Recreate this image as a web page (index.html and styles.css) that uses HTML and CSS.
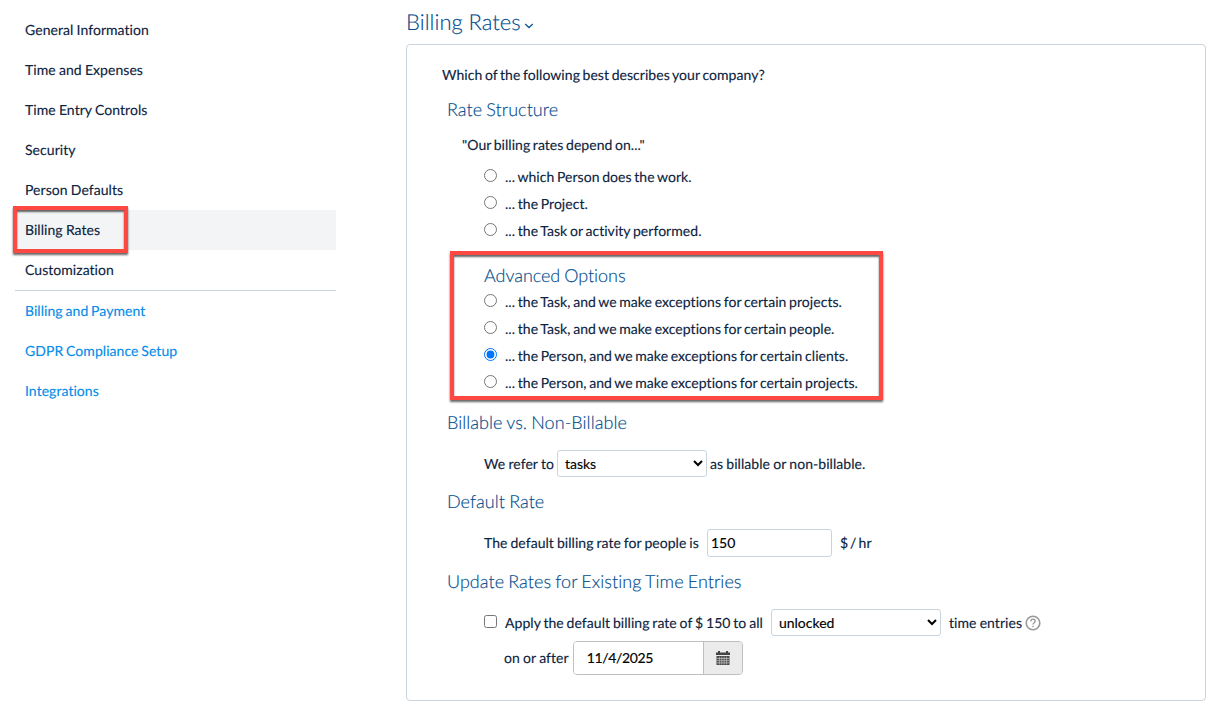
FILE: index.html
```html
<!DOCTYPE html>
<html lang="en">
<head>
    <meta charset="UTF-8">
    <meta name="viewport" content="width=device-width, initial-scale=1.0">
    <title>Billing Rates</title>
    <link rel="stylesheet" href="styles.css">
</head>
<body>
    <!-- Settings Menu -->
    <nav class="sidebar">
        <a class="menu-item" href="#">General Information</a>
        <a class="menu-item" href="#">Time and Expenses</a>
        <a class="menu-item" href="#">Time Entry Controls</a>
        <a class="menu-item" href="#">Security</a>
        <a class="menu-item" href="#">Person Defaults</a>
        <a class="menu-item active" href="#">Billing Rates</a>
        <a class="menu-item" href="#">Customization</a>
        <div class="menu-links">
            <a class="menu-item link" href="#">Billing and Payment</a>
            <a class="menu-item link" href="#">GDPR Compliance Setup</a>
            <a class="menu-item link" href="#">Integrations</a>
        </div>
    </nav>

    <!-- Main Content -->
    <main class="content">
        <h1 class="page-title">Billing Rates
            <svg class="chevron" width="10" height="6" viewBox="0 0 10 6"><path d="M1.2 1 L5 4.5 L8.8 1" fill="none" stroke="#0f5595" stroke-width="1.3"/></svg>
        </h1>

        <form class="panel">
            <p class="question">Which of the following best describes your company?</p>

            <!-- Rate Structure -->
            <h2 class="section-title">Rate Structure</h2>
            <p class="quote">"Our billing rates depend on..."</p>
            <div class="options">
                <label class="option"><input type="radio" name="rate">... which Person does the work.</label>
                <label class="option"><input type="radio" name="rate">... the Project.</label>
                <label class="option"><input type="radio" name="rate">... the Task or activity performed.</label>
            </div>

            <div class="advanced highlight">
                <h2 class="advanced-title">Advanced Options</h2>
                <label class="option"><input type="radio" name="rate">... the Task, and we make exceptions for certain projects.</label>
                <label class="option"><input type="radio" name="rate">... the Task, and we make exceptions for certain people.</label>
                <label class="option"><input type="radio" name="rate" checked>... the Person, and we make exceptions for certain clients.</label>
                <label class="option"><input type="radio" name="rate">... the Person, and we make exceptions for certain projects.</label>
            </div>

            <!-- Billable vs. Non-Billable -->
            <h2 class="section-title">Billable vs. Non-Billable</h2>
            <div class="field-row billable-row">
                <span>We refer to</span>
                <select class="select task-select"><option>tasks</option></select>
                <span>as billable or non-billable.</span>
            </div>

            <!-- Default Rate -->
            <h2 class="section-title">Default Rate</h2>
            <div class="field-row rate-row">
                <span>The default billing rate for people is</span>
                <input class="rate-input" type="text" value="150">
                <span class="unit">$ / hr</span>
            </div>

            <!-- Update Rates -->
            <h2 class="section-title">Update Rates for Existing Time Entries</h2>
            <div class="field-row update-row">
                <label class="apply"><input type="checkbox">Apply the default billing rate of $ 150 to all</label>
                <select class="select lock-select"><option>unlocked</option></select>
                <span>time entries</span>
                <svg class="help" width="16" height="16" viewBox="0 0 16 16">
                    <circle cx="8" cy="8" r="6.8" fill="none" stroke="#999" stroke-width="1.6"/>
                    <path d="M5.9 6.4 C5.9 3.4 10.2 3.5 10.2 6.1 C10.2 7.7 8 7.7 8 9.6" fill="none" stroke="#999" stroke-width="1.4"/>
                    <rect x="7.3" y="10.7" width="1.4" height="1.5" fill="#999"/>
                </svg>
            </div>
            <div class="field-row date-row">
                <span>on or after</span>
                <div class="date-group">
                    <input class="date-input" type="text" value="11/4/2025">
                    <button class="date-button" type="button" aria-label="Open calendar">
                        <svg width="14" height="15" viewBox="0 0 14 15">
                            <path d="M2 0h2v1.4h6V0h2v1.4h2V4H0V1.4h2z" fill="#444"/>
                            <path d="M.5 5h13v9H.5z" fill="#4a4a4a"/>
                            <path d="M1 7.5h12M1 9.7h12M1 11.9h12M3.4 5.7v7.8M5.8 5.7v7.8M8.2 5.7v7.8M10.6 5.7v7.8" stroke="#c4c4c4" stroke-width=".7"/>
                        </svg>
                    </button>
                </div>
            </div>
        </form>
    </main>
</body>
</html>
```
FILE: styles.css
```css
* {
    box-sizing: border-box;
}

body {
    margin: 0;
    display: flex;
    height: 720px;
    font-family: Lato, sans-serif;
    font-size: 14px;
    font-variant-ligatures: none;
    text-rendering: geometricPrecision;
    letter-spacing: 0.05px;
    word-spacing: -0.4px;
    -webkit-text-stroke: 0.15px;
    color: #0c2340;
    background-color: #fff;
    overflow: hidden;
}

/* Settings Menu */
.sidebar {
    width: 321px;
    margin: 10px 70px 0 15px;
    flex-shrink: 0;
}

.menu-item {
    display: block;
    height: 40px;
    line-height: 40px;
    padding-left: 10px;
    color: #0c2340;
    text-decoration: none;
}

.menu-item.active {
    position: relative;
    background-color: #f3f4f6;
}

/* Red frame over the current item */
.menu-item.active::after {
    content: "";
    position: absolute;
    box-sizing: border-box;
    left: -2px;
    top: -4px;
    width: 115px;
    height: 47px;
    border: 4px solid #fe4943;
    box-shadow: 0 2px 2px rgba(0, 0, 0, 0.6), inset 0 2px 2px rgba(0, 0, 0, 0.6);
}

.menu-links {
    border-top: 1px solid #c8d4de;
}

.menu-item.link {
    color: #058ce8;
    word-spacing: -0.8px;
}

/* Main Content */
.content {
    width: 800px;
}

.page-title {
    margin: 0;
    height: 44px;
    line-height: 43px;
    font-size: 22px;
    font-weight: 300;
    color: #004b8d;
}

.chevron {
    margin-left: -2px;
    vertical-align: 1px;
}

.panel {
    height: 657px;
    padding-top: 15px;
    border: 1px solid #c8d4de;
    border-radius: 4px;
}

.question,
.quote {
    margin: 0 0 4px 35px;
    line-height: 30px;
    word-spacing: -1.05px;
}

.quote {
    margin: 6px 0 3px 55px;
}

.section-title,
.advanced-title {
    margin: 0 0 0 40px;
    line-height: 30px;
    font-size: 18px;
    font-weight: 300;
    word-spacing: -0.8px;
    color: #004b8d;
}

/* Radio Options */
.options {
    margin-left: 77px;
}

.option {
    display: flex;
    height: 27px;
    line-height: 27px;
    word-spacing: -1px;
}

.option input {
    width: 13px;
    height: 13px;
    margin: 6px 8px 0 0;
}

.advanced {
    width: 433px;
    height: 149px;
    margin: 7px 0 7px 43px;
    padding: 7px 0 0 30px;
}

.advanced-title {
    margin: 0;
    line-height: 26px;
    letter-spacing: -0.05px;
}

.highlight {
    border: 4px solid #fe4943;
    box-shadow: 0 2px 2px rgba(0, 0, 0, 0.6), inset 0 2px 2px rgba(0, 0, 0, 0.6);
}

/* Form Rows */
.field-row {
    display: flex;
    align-items: center;
    margin-left: 77px;
}

.select,
.rate-input {
    font-family: inherit;
    font-size: 14px;
    color: #000;
    background-color: #fff;
    border: 1px solid #c8d4de;
    border-radius: 3px;
}

.select {
    height: 27px;
    padding: 0 0 0 3px;
}

.billable-row {
    height: 27px;
    margin-top: 13px;
    margin-bottom: 9px;
    gap: 3px;
}

.task-select {
    width: 150px;
}

.rate-row {
    height: 28px;
    margin-top: 13px;
    margin-bottom: 9px;
    gap: 8px;
    word-spacing: -0.67px;
}

.rate-row span {
    margin-top: -1px;
}

.rate-row .unit {
    word-spacing: -1.6px;
}

.rate-input {
    width: 125px;
    height: 28px;
    padding: 0 3px 1px;
}

.update-row {
    height: 27px;
    margin-top: 13px;
    margin-bottom: 5px;
    gap: 8px;
}

.apply {
    display: flex;
    align-items: center;
    word-spacing: -0.8px;
}

.apply input {
    width: 13px;
    height: 13px;
    margin: -3px 8px 0 0;
}

.lock-select {
    width: 170px;
}

.help {
    margin-left: -5px;
}

.date-row {
    height: 34px;
    margin-left: 97px;
    gap: 4px;
}

.date-row span {
    margin-top: -1px;
}

.date-group {
    display: flex;
    width: 170px;
    height: 34px;
    border: 1px solid #bfbfbf;
    border-radius: 4px;
    overflow: hidden;
}

.date-input {
    width: 129px;
    padding: 0 13px 1px;
    border: none;
    font-family: inherit;
    font-size: 14px;
    letter-spacing: -0.35px;
    color: #000;
}

.date-button {
    display: flex;
    flex: 1;
    align-items: center;
    justify-content: center;
    padding: 0;
    border: none;
    border-left: 1px solid #bfbfbf;
    background-color: #ebebeb;
}
```
